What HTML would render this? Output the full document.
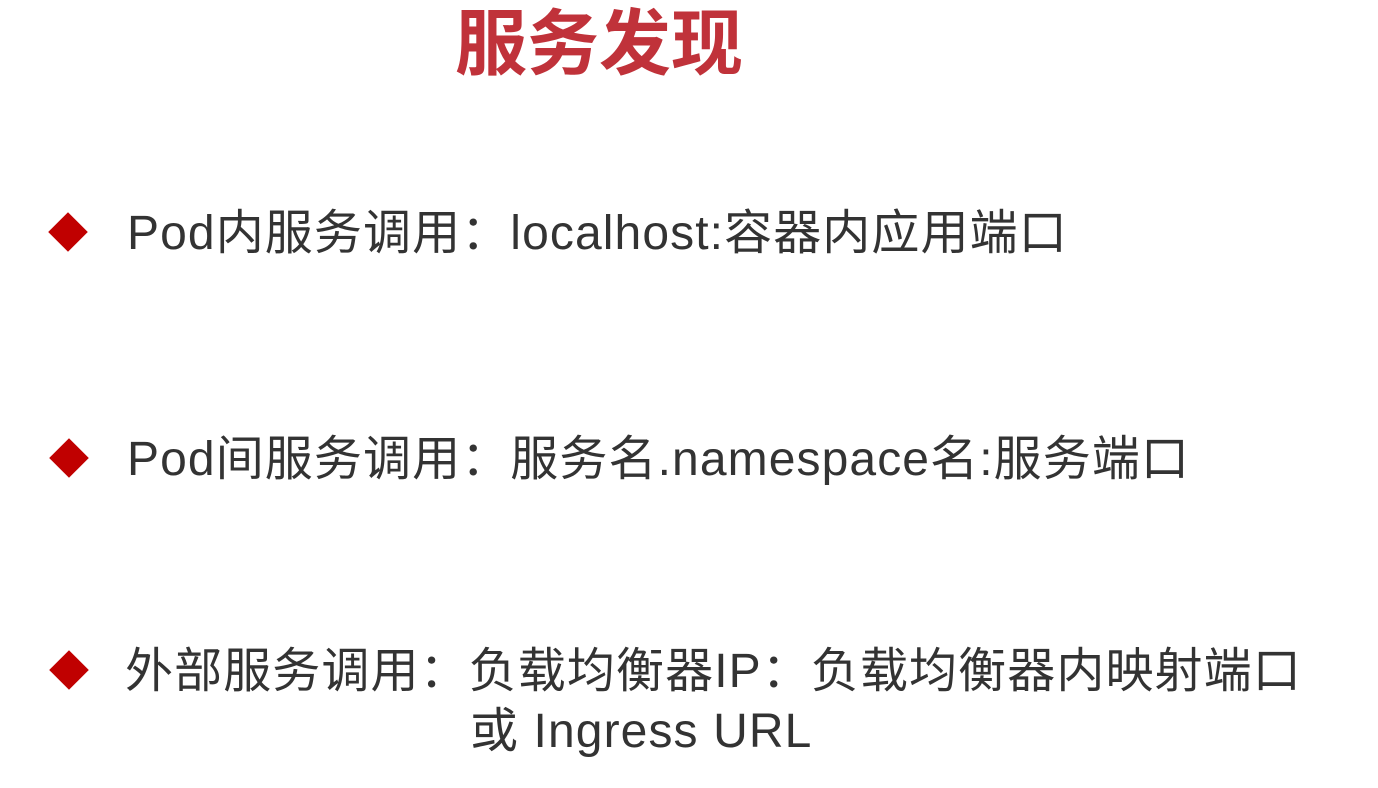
<!DOCTYPE html>
<html><head><meta charset="utf-8"><style>
html,body{margin:0;padding:0;background:#fff;width:1378px;height:788px;overflow:hidden;position:relative}
.t{position:absolute;left:455px;top:8px;font:bold 72px/74px "Liberation Sans","Noto Sans CJK SC",sans-serif;color:#c0323a;letter-spacing:0}
.l{position:absolute;font:48px/48px "Liberation Sans","Noto Sans CJK SC",sans-serif;color:#333;white-space:nowrap;letter-spacing:1.1px}
.d{position:absolute;width:28px;height:28px;background:#c00000;transform:rotate(45deg)}
</style></head><body>
<div class="t">服务发现</div>
<div class="d" style="left:54px;top:218px"></div>
<div class="l" style="left:127px;top:210px">Pod内服务调用：localhost:容器内应用端口</div>
<div class="d" style="left:55px;top:444px"></div>
<div class="l" style="left:127px;top:436px">Pod间服务调用：服务名.namespace名:服务端口</div>
<div class="d" style="left:55px;top:656px"></div>
<div class="l" style="left:125px;top:648px">外部服务调用：负载均衡器IP：负载均衡器内映射端口</div>
<div class="l" style="left:470px;top:708px">或 Ingress URL</div>
</body></html>
